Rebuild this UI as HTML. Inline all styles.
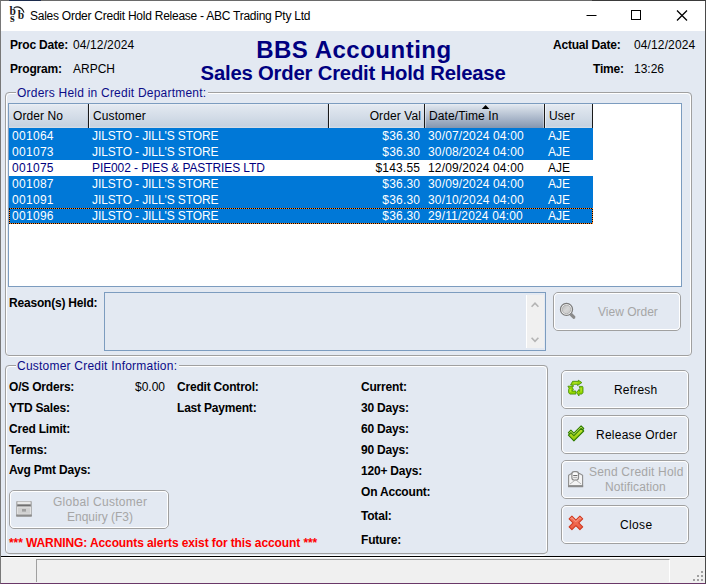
<!DOCTYPE html>
<html><head><meta charset="utf-8">
<style>
*{margin:0;padding:0;box-sizing:border-box}
html,body{width:706px;height:584px;overflow:hidden;background:#e3e9f2;font-family:"Liberation Sans",sans-serif;font-size:12px;color:#000}
.a{position:absolute}
.t{position:absolute;white-space:nowrap;line-height:14px}
.b{font-weight:bold;letter-spacing:-0.2px}
.gb{position:absolute;border:1px solid #a0a0a0;border-radius:4px}
.gbw{position:absolute;border:1px solid #fff;border-radius:4px}
.gt{position:absolute;white-space:nowrap;line-height:14px;color:#0c0c88;background:#e3e9f2;padding:0 2px 0 1px;letter-spacing:0.22px}
.btn{position:absolute;border:1px solid #a0a0a0;border-radius:5px}
.btn>.in{position:absolute;left:0;top:0;right:0;bottom:0;border:1px solid #fff;border-radius:4px}
.row{position:absolute;left:9px;width:584px;height:16px;background:#0078d7;color:#fff}
.row.w{background:#fff;color:#000}
.row.w .nv{color:#000080}
.row span{position:absolute;top:1px;line-height:14px;white-space:nowrap}
.hd{position:absolute;top:104px;height:24px;background:linear-gradient(#edf1f6,#e2e8f0 8%,#c6d2e0 92%,#d8dfe8)}
.hd span{position:absolute;top:5px;line-height:14px;white-space:nowrap;letter-spacing:0.1px}
.sep{position:absolute;top:104px;width:1px;height:24px;background:#1a1a1a}
.dis{color:#a6a6a6}
.focus{position:absolute;left:0;top:0;width:584px;height:16px;
background:repeating-linear-gradient(90deg,#000 0 1px,#ff8728 1px 2px) top/100% 1px no-repeat,
repeating-linear-gradient(90deg,#000 0 1px,#ff8728 1px 2px) bottom/100% 1px no-repeat,
repeating-linear-gradient(0deg,#000 0 1px,#ff8728 1px 2px) left/1px 100% no-repeat,
repeating-linear-gradient(0deg,#000 0 1px,#ff8728 1px 2px) right/1px 100% no-repeat}
</style></head><body>
<!-- window frame -->
<div class="a" style="left:0;top:0;width:706px;height:584px;border:1px solid #787878;border-top-color:#6a6a6a;border-right-color:#4a4a4a;border-bottom-color:#6a3868"></div>
<div class="a" style="left:9px;top:0;width:32px;height:1px;background:#1c2b4c"></div>
<div class="a" style="left:592px;top:0;width:114px;height:1px;background:#3a3a3a"></div>
<!-- title bar -->
<div class="a" style="left:1px;top:1px;width:704px;height:30px;background:#fff"></div>
<svg class="a" style="left:0;top:0" width="30" height="30" viewBox="0 0 30 30">
 <g font-family="Liberation Serif" font-weight="bold" fill="#1a1a1a" font-size="11.5">
  <text x="9.6" y="14.8">b</text>
  <text x="10" y="21.6" font-size="12">s</text>
  <text x="17.8" y="18.8">b</text>
 </g>
 <path d="M13.6 8.4C15.8 6 21.8 6 24 12.6" fill="none" stroke="#1a1a1a" stroke-width="1.15"/>
</svg>
<div class="t" style="left:30px;top:9px;font-size:12px;letter-spacing:-0.25px;color:#000">Sales Order Credit Hold Release - ABC Trading Pty Ltd</div>
<svg class="a" style="left:580px;top:5px" width="120" height="22">
 <path d="M6.5 10.5h10" stroke="#000" stroke-width="1"/>
 <rect x="51.5" y="5.5" width="9" height="9" fill="none" stroke="#000" stroke-width="1"/>
 <path d="M97 5.5l10 10M107 5.5l-10 10" stroke="#000" stroke-width="1.25"/>
</svg>

<!-- header -->
<div class="t b" style="left:10px;top:38px">Proc Date:</div>
<div class="t" style="left:73px;top:38px;letter-spacing:0.12px">04/12/2024</div>
<div class="t b" style="left:10px;top:62px">Program:</div>
<div class="t" style="left:73px;top:62px">ARPCH</div>
<div class="t b" style="left:256.2px;top:36.5px;font-size:24px;letter-spacing:0.5px;line-height:26px;color:#000080">BBS Accounting</div>
<div class="t b" style="left:200.6px;top:61.8px;font-size:20.3px;line-height:22px;color:#000080">Sales Order Credit Hold Release</div>
<div class="t b" style="left:553px;top:38px">Actual Date:</div>
<div class="t" style="left:634px;top:38px;letter-spacing:0.12px">04/12/2024</div>
<div class="t b" style="left:593px;top:62px">Time:</div>
<div class="t" style="left:634px;top:62px">13:26</div>

<!-- group 1 -->
<div class="gbw" style="left:6px;top:93px;width:685px;height:264px"></div>
<div class="gb" style="left:5px;top:92px;width:687px;height:264px"></div>
<div class="gt" style="left:16px;top:86px">Orders Held in Credit Department:</div>

<!-- grid -->
<div class="a" style="left:8px;top:103px;width:674px;height:184px;border:1px solid #7c9cbf;background:#fff"></div>
<div class="hd" style="left:9px;width:80px"><span style="left:4px">Order No</span></div>
<div class="hd" style="left:89px;width:240px"><span style="left:4px">Customer</span></div>
<div class="hd" style="left:329px;width:96px"><span style="right:4px">Order Val</span></div>
<div class="hd" style="left:425px;width:120px;background:linear-gradient(#e8edf3,#dbe2eb 8%,#8496b0)"><span style="left:4px">Date/Time In</span></div>
<div class="hd" style="left:545px;width:48px"><span style="left:4px">User</span></div>
<div class="a" style="left:89px;top:104px;width:1px;height:24px;background:rgba(255,255,255,0.55)"></div><div class="a" style="left:87px;top:104px;width:1px;height:24px;background:rgba(120,140,170,0.12)"></div>
<div class="sep" style="left:88px"></div>
<div class="a" style="left:329px;top:104px;width:1px;height:24px;background:rgba(255,255,255,0.55)"></div><div class="a" style="left:327px;top:104px;width:1px;height:24px;background:rgba(120,140,170,0.12)"></div>
<div class="sep" style="left:328px"></div>
<div class="a" style="left:425px;top:104px;width:1px;height:24px;background:rgba(255,255,255,0.45)"></div>
<div class="sep" style="left:424px"></div>
<div class="a" style="left:545px;top:104px;width:1px;height:24px;background:rgba(255,255,255,0.55)"></div><div class="a" style="left:543px;top:104px;width:1px;height:24px;background:rgba(255,255,255,0.35)"></div>
<div class="sep" style="left:544px"></div>
<div class="sep" style="left:592px"></div>
<svg class="a" style="left:480px;top:104px" width="10" height="6"><path d="M1.8 5h7.6L5.6 1z" fill="#000"/></svg>

<div class="row" style="top:128px"><span style="left:3px;letter-spacing:0.3px">001064</span><span style="left:83px;letter-spacing:-0.1px">JILSTO - JILL'S STORE</span><span style="right:172.8px;letter-spacing:0.2px">$36.30</span><span style="left:419px;letter-spacing:0.15px">30/07/2024 04:00</span><span style="left:539px">AJE</span></div>
<div class="row" style="top:144px"><span style="left:3px;letter-spacing:0.3px">001073</span><span style="left:83px;letter-spacing:-0.1px">JILSTO - JILL'S STORE</span><span style="right:172.8px;letter-spacing:0.2px">$36.30</span><span style="left:419px;letter-spacing:0.15px">30/08/2024 04:00</span><span style="left:539px">AJE</span></div>
<div class="row w" style="top:160px"><span class="nv" style="left:3px;letter-spacing:0.3px">001075</span><span class="nv" style="left:83px;letter-spacing:-0.1px">PIE002 - PIES &amp; PASTRIES LTD</span><span style="right:172.8px;letter-spacing:0.2px">$143.55</span><span style="left:419px;letter-spacing:0.15px">12/09/2024 04:00</span><span style="left:539px">AJE</span></div>
<div class="row" style="top:176px"><span style="left:3px;letter-spacing:0.3px">001087</span><span style="left:83px;letter-spacing:-0.1px">JILSTO - JILL'S STORE</span><span style="right:172.8px;letter-spacing:0.2px">$36.30</span><span style="left:419px;letter-spacing:0.15px">30/09/2024 04:00</span><span style="left:539px">AJE</span></div>
<div class="row" style="top:192px"><span style="left:3px;letter-spacing:0.3px">001091</span><span style="left:83px;letter-spacing:-0.1px">JILSTO - JILL'S STORE</span><span style="right:172.8px;letter-spacing:0.2px">$36.30</span><span style="left:419px;letter-spacing:0.15px">30/10/2024 04:00</span><span style="left:539px">AJE</span></div>
<div class="row" style="top:208px"><div class="focus"></div><span style="left:3px;letter-spacing:0.3px">001096</span><span style="left:83px;letter-spacing:-0.1px">JILSTO - JILL'S STORE</span><span style="right:172.8px;letter-spacing:0.2px">$36.30</span><span style="left:419px;letter-spacing:0.15px">29/11/2024 04:00</span><span style="left:539px">AJE</span></div>

<!-- reason held -->
<div class="t b" style="left:9px;top:296px">Reason(s) Held:</div>
<div class="a" style="left:104px;top:292px;width:442px;height:59px;border:1px solid #7c9cbf"></div>
<div class="a" style="left:526px;top:295px;width:18px;height:53px;background:#f0f0f0;border-left:1px solid #fff"></div>
<svg class="a" style="left:526px;top:295px" width="18" height="53"><path d="M5.6 11.8l3.4-3.6 3.4 3.6M5.6 42.8l3.4 3.6 3.4-3.6" fill="none" stroke="#b4b4b4" stroke-width="1.6"/></svg>

<!-- view order -->
<div class="btn" style="left:553px;top:292px;width:128px;height:39px"><div class="in"></div></div>
<svg class="a" style="left:556px;top:300px" width="24" height="24">
 <defs><linearGradient id="mg" x1="0" y1="0" x2="1" y2="1"><stop offset="0" stop-color="#b8b8b8"/><stop offset="0.5" stop-color="#d6d6d6"/><stop offset="1" stop-color="#c4c4c4"/></linearGradient></defs>
 <path d="M14.2 14.2l1.8-1.2 3.4 3.4-.3 2.2-1.7.5-3.6-3.6z" fill="#8a8a8a"/>
 <circle cx="10.5" cy="9.4" r="6" fill="#fafafa" stroke="#7c7c7c" stroke-width="1.3"/>
 <circle cx="10.5" cy="9.4" r="4.3" fill="url(#mg)" stroke="#a8a8a8" stroke-width="0.8"/>
</svg>
<div class="t dis" style="left:598px;top:305px">View Order</div>

<!-- group 2 -->
<div class="gbw" style="left:6px;top:366px;width:541px;height:190px"></div>
<div class="gb" style="left:5px;top:365px;width:543px;height:189px"></div>
<div class="gt" style="left:16px;top:359px">Customer Credit Information:</div>

<div class="t b" style="left:9px;top:380px">O/S Orders:</div>
<div class="t" style="left:135px;top:380px">$0.00</div>
<div class="t b" style="left:9px;top:401px">YTD Sales:</div>
<div class="t b" style="left:9px;top:422px">Cred Limit:</div>
<div class="t b" style="left:9px;top:443px">Terms:</div>
<div class="t b" style="left:9px;top:463px">Avg Pmt Days:</div>
<div class="t b" style="left:177px;top:380px">Credit Control:</div>
<div class="t b" style="left:177px;top:401px">Last Payment:</div>
<div class="t b" style="left:361px;top:380px">Current:</div>
<div class="t b" style="left:361px;top:401px">30 Days:</div>
<div class="t b" style="left:361px;top:422px">60 Days:</div>
<div class="t b" style="left:361px;top:443px">90 Days:</div>
<div class="t b" style="left:361px;top:464px">120+ Days:</div>
<div class="t b" style="left:361px;top:485px">On Account:</div>
<div class="t b" style="left:361px;top:509px">Total:</div>
<div class="t b" style="left:361px;top:533px">Future:</div>

<div class="btn" style="left:9px;top:490px;width:160px;height:39px"><div class="in"></div></div>
<svg class="a" style="left:10px;top:495px" width="30" height="30">
 <rect x="6.2" y="6" width="15.6" height="15.6" rx="1" fill="#a4a4a4"/>
 <rect x="7.4" y="6.6" width="13.2" height="2.6" fill="#e8e8e8"/>
 <rect x="7.4" y="9.6" width="13.2" height="1.8" fill="#707070"/>
 <rect x="7.6" y="12" width="12.8" height="7.2" fill="#d0d0d0" stroke="#ececec" stroke-width="0.8"/>
 <rect x="12" y="14" width="4" height="2.6" fill="#a0a0a0"/>
 <rect x="6.2" y="19.6" width="15.6" height="2" fill="#8c8c8c"/>
</svg>
<div class="t dis" style="left:53px;top:495px;letter-spacing:0.28px">Global Customer</div>
<div class="t dis" style="left:67px;top:510px">Enquiry (F3)</div>
<div class="t b" style="left:9px;top:536px;color:#ff0000;letter-spacing:-0.1px">*** WARNING: Accounts alerts exist for this account ***</div>

<!-- right buttons -->
<div class="btn" style="left:561px;top:370px;width:128px;height:39px"><div class="in"></div></div>
<div class="btn" style="left:561px;top:415px;width:128px;height:39px"><div class="in"></div></div>
<div class="btn" style="left:561px;top:460px;width:128px;height:39px"><div class="in"></div></div>
<div class="btn" style="left:561px;top:505px;width:128px;height:39px"><div class="in"></div></div>

<svg class="a" style="left:566px;top:379px" width="20" height="20">
 <g fill="#92d400" stroke="#3d8a00" stroke-width="0.8" stroke-linejoin="round">
  <path d="M4.6 5.8L6.6 2.3H12.6L12.3 1.2L15.9 3.6L11.5 6.6L11.9 5.3H8.4L7.4 6.4Z"/>
  <path d="M1.9 7.2L7.4 7.1L6.3 8.6L7.4 10.6L6 11.6V12H9.8V15.1H3.8L2.6 13.6V10.6L3.1 9.2Z"/>
  <path d="M13.2 7.4H16.6L17 8.6V13.6L15.8 15.1H13V17L10.6 13.6L13 10.4V12H13.9V9.4Z"/>
 </g>
 <g fill="#c8f040" opacity="0.8">
  <rect x="7.5" y="3.3" width="4" height="1.2"/>
  <rect x="3.6" y="10" width="1.2" height="3"/>
  <rect x="14.4" y="9" width="1.2" height="3.5"/>
 </g>
</svg>
<div class="t" style="left:614px;top:383px;letter-spacing:0.2px">Refresh</div>

<svg class="a" style="left:563px;top:422px" width="24" height="24">
 <defs><linearGradient id="cg" x1="0" y1="0" x2="0" y2="1"><stop offset="0" stop-color="#c2e83a"/><stop offset="1" stop-color="#8fc400"/></linearGradient></defs>
 <path d="M5.4 10.6L7.9 8.1L10.9 11.1L18.1 3.9L20.7 6.5L10.9 16.3Z" fill="#d6f46a" stroke="#2f7d00" stroke-width="1.1" stroke-linejoin="round"/>
 <path d="M5.4 13.1L7.9 10.6L10.9 13.6L18.1 6.4L20.7 9L10.9 18.8Z" fill="url(#cg)" stroke="#2f7d00" stroke-width="1.1" stroke-linejoin="round"/>
</svg>
<div class="t" style="left:596px;top:428px;letter-spacing:0.24px">Release Order</div>

<svg class="a" style="left:563px;top:467px" width="24" height="24">
 <path d="M5.6 19.6V8.4L8.4 6.6H16.6L19.6 8.4V19.6Z" fill="#f4f4f4" stroke="#8e8e8e" stroke-width="1.1"/>
 <rect x="8.9" y="4.6" width="6.6" height="8.4" rx="2.2" fill="#fbfbfb" stroke="#8a8a8a" stroke-width="1.2"/>
 <path d="M10.2 8.6H14.4" stroke="#5e5e5e" stroke-width="1"/>
 <path d="M10.2 10.7H14.4" stroke="#9a9a9a" stroke-width="0.9"/>
 <path d="M7 17L12.6 12.8L18.2 17" fill="none" stroke="#a4a4a4" stroke-width="0.8"/>
 <rect x="5.1" y="18.1" width="15" height="1.9" fill="#8a8a8a"/>
</svg>
<div class="t dis" style="left:589px;top:465px;letter-spacing:0.2px">Send Credit Hold</div>
<div class="t dis" style="left:605px;top:480px;letter-spacing:0.12px">Notification</div>

<svg class="a" style="left:563px;top:511px" width="24" height="24">
 <g transform="translate(12.9 11.9) scale(1.08) translate(-12.5 -11.9)">
 <defs><linearGradient id="xg" x1="0" y1="0" x2="0" y2="1"><stop offset="0" stop-color="#f47a62"/><stop offset="1" stop-color="#ec5a40"/></linearGradient></defs>
 <path d="M6.2 8.2L8.8 5.6L12.5 9.3L16.2 5.6L18.8 8.2L15.1 11.9L18.8 15.6L16.2 18.2L12.5 14.5L8.8 18.2L6.2 15.6L9.9 11.9Z" fill="url(#xg)" stroke="#cf3a22" stroke-width="1" stroke-linejoin="round"/>
 <path d="M7.6 8.2L8.8 7L12.5 10.7L16.2 7L17.4 8.2" fill="none" stroke="#ffb8a8" stroke-width="0.8" opacity="0.8"/>
 </g>
</svg>
<div class="t" style="left:620px;top:518px;letter-spacing:0.35px">Close</div>

<!-- status bar -->
<div class="a" style="left:1px;top:556px;width:704px;height:1px;background:#000"></div>
<div class="a" style="left:1px;top:557px;width:704px;height:26px;background:#f0f0f0;border-top:1px solid #fff"></div>
<div class="a" style="left:36px;top:559px;width:634px;height:23px;border-left:1px solid #a0a0a0;border-top:1px solid #a0a0a0;border-right:1px solid #fff"></div>
<svg class="a" style="left:692px;top:569px" width="12" height="13">
 <g fill="#a0a0a0"><rect x="9" y="2" width="2" height="2"/><rect x="5" y="6" width="2" height="2"/><rect x="9" y="6" width="2" height="2"/><rect x="1" y="10" width="2" height="2"/><rect x="5" y="10" width="2" height="2"/><rect x="9" y="10" width="2" height="2"/></g>
</svg>
</body></html>
